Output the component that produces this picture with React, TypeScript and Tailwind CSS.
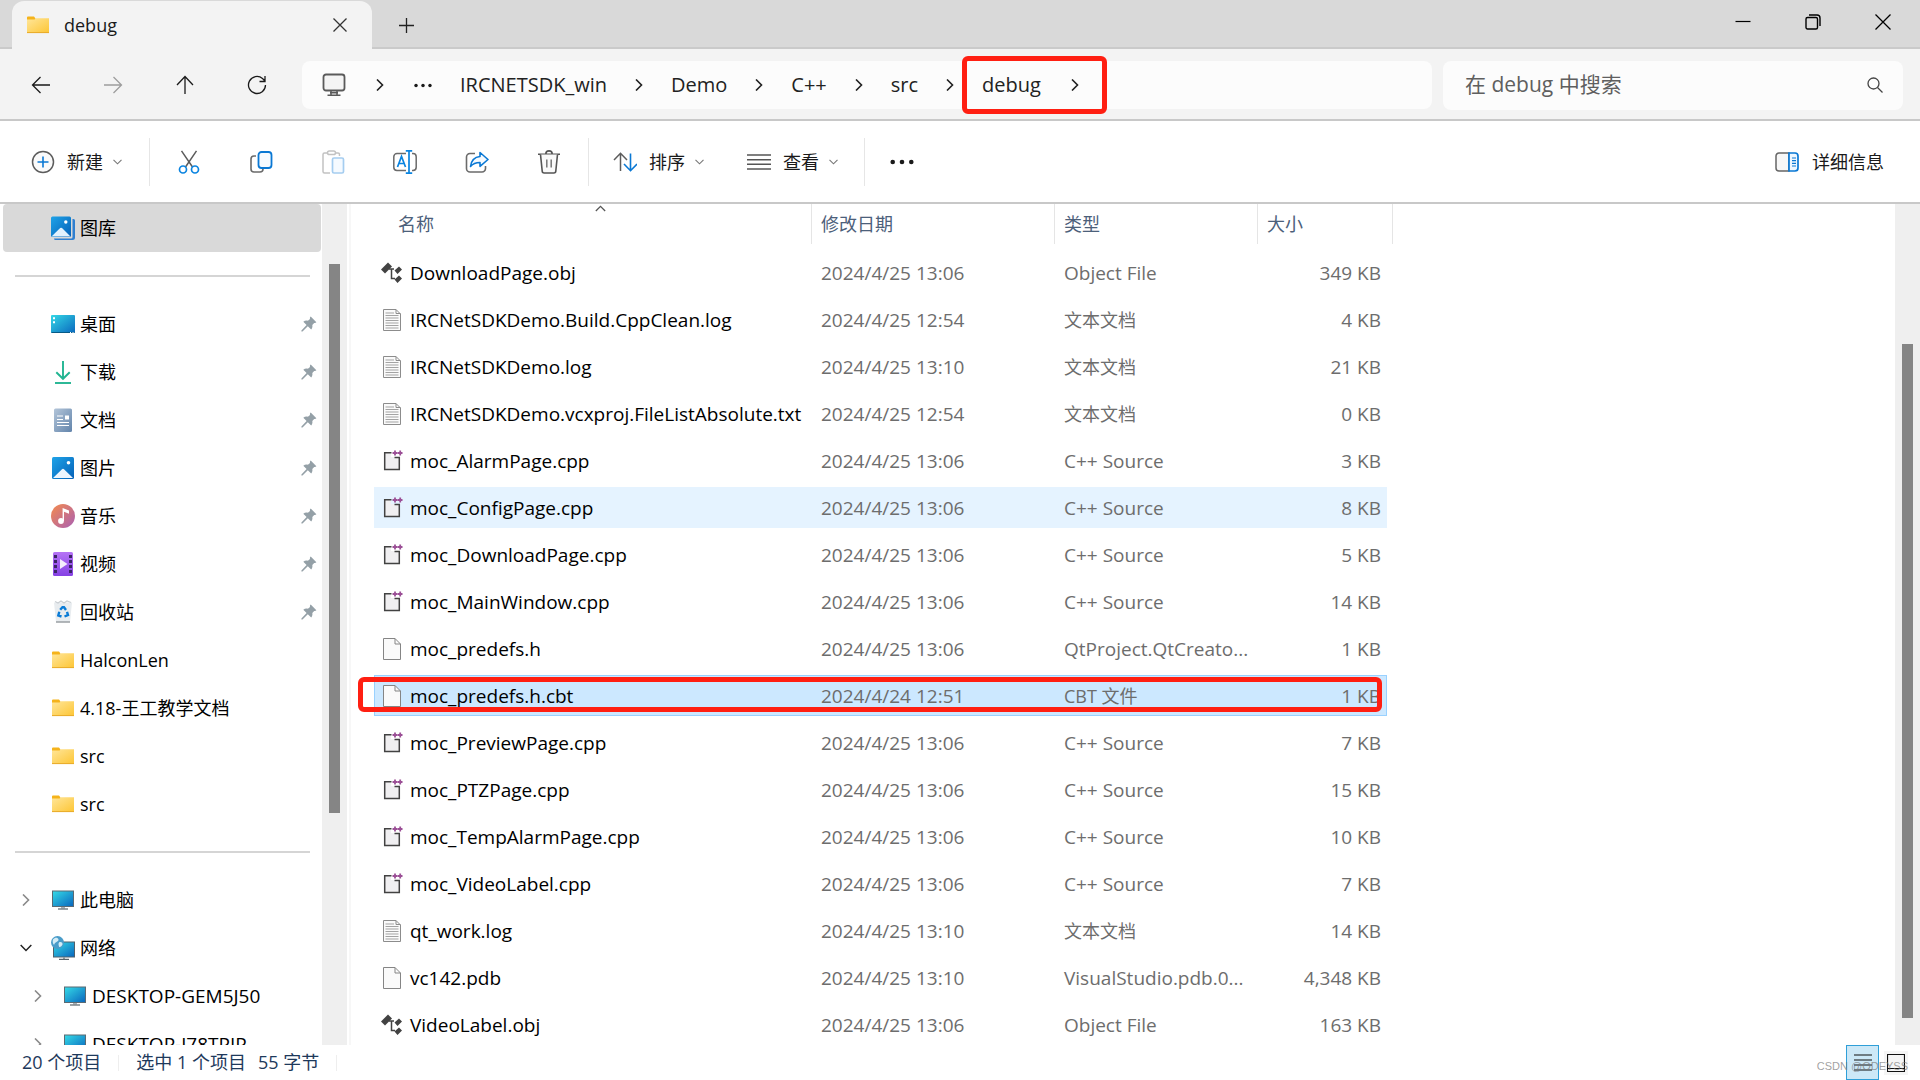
import React from 'react';
import clsx from 'clsx';

type IconProps = { className?: string };

const Svg: React.FC<{ children: React.ReactNode; className?: string }> = ({ children, className = 'h-6 w-6' }) => (
  <svg viewBox="0 0 24 24" fill="none" aria-hidden="true" className={clsx('block shrink-0', className)}>
    {children}
  </svg>
);

/* ---------- small glyphs ---------- */

const ChevronRight = ({ className = 'h-3 w-2' }: IconProps) => (
  <svg viewBox="0 0 8 12" fill="none" aria-hidden="true" className={clsx('block shrink-0', className)}>
    <path d="M1 0.5 6.5 6 1 11.5" stroke="currentColor" strokeWidth="1.6" />
  </svg>
);

const ChevronDown = ({ className = 'h-[6px] w-[9px] text-[#777]' }: IconProps) => (
  <svg viewBox="0 0 9 6" fill="none" aria-hidden="true" className={clsx('block shrink-0', className)}>
    <path d="M0.5 0.8 4.5 4.8 8.5 0.8" stroke="currentColor" strokeWidth="1.1" />
  </svg>
);

const Pin = () => (
  <svg viewBox="0 0 16 16" aria-hidden="true" className="block h-4 w-4 shrink-0">
    <path
      d="M9.7 0.6 15.4 6.2C14.8 7 14 7 13.2 6.9L11.3 9C11.7 10.6 11.3 12.2 10.2 13.4L6.8 10.3 1.5 15.5 0.4 15.4 0.4 14.5 5.6 9.1 2.3 5.7C3.7 4.7 5.3 4.3 6.9 4.8L9 2.9C8.8 2 9 1.2 9.7 0.6Z"
      fill="#94a0a7"
    />
  </svg>
);

/* ---------- command bar ---------- */

const NewIcon = () => (
  <Svg>
    <circle cx="12" cy="12" r="10.5" stroke="#5c5c5c" strokeWidth="1.5" fill="#fafafa" />
    <path d="M12 6.5V17.5M6.5 12H17.5" stroke="#0a78d4" strokeWidth="1.6" />
  </Svg>
);

const CutIcon = () => (
  <Svg>
    <path d="M4.5 0.8 15.5 17M19.5 0.8 8.5 17" stroke="#5c5c5c" strokeWidth="1.5" />
    <circle cx="6" cy="19.5" r="3.5" stroke="#0a84e0" strokeWidth="1.7" />
    <circle cx="18" cy="19.5" r="3.5" stroke="#0a84e0" strokeWidth="1.7" />
  </Svg>
);

const CopyIcon = () => (
  <Svg>
    <path d="M7 6H5a3 3 0 0 0-3 3v10a3 3 0 0 0 3 3h6a3 3 0 0 0 3-3" stroke="#6b6b6b" strokeWidth="1.6" />
    <rect x="9.5" y="2" width="13" height="16" rx="3" stroke="#0a78d4" strokeWidth="1.8" fill="#f7fbff" />
  </Svg>
);

const PasteIcon = () => (
  <Svg>
    <path
      d="M6 3H3.5A1.5 1.5 0 0 0 2 4.5V21.5A1.5 1.5 0 0 0 3.5 23H9M14 3h3a1.5 1.5 0 0 1 1.5 1.5V6"
      stroke="#c2c2c2"
      strokeWidth="1.5"
    />
    <rect x="6.5" y="1" width="8" height="3.6" rx="1.8" stroke="#c2c2c2" strokeWidth="1.5" />
    <rect x="11.5" y="8" width="11" height="15" rx="1.5" stroke="#a5cdf0" strokeWidth="1.7" fill="#f5faff" />
  </Svg>
);

const RenameIcon = () => (
  <Svg>
    <path
      d="M13 3.5H4A3.2 3.2 0 0 0 0.8 6.7V17.3A3.2 3.2 0 0 0 4 20.5H13M19 3.5h1A3.2 3.2 0 0 1 23.2 6.7V17.3A3.2 3.2 0 0 1 20 20.5H19"
      stroke="#6b6b6b"
      strokeWidth="1.5"
    />
    <path
      d="M4.5 17 8.5 6.5 12.5 17M5.8 13.5H11.2M12.8 0.9H19.2M12.8 23.1H19.2M16 0.9V23.1"
      stroke="#0a84e0"
      strokeWidth="1.7"
    />
  </Svg>
);

const ShareIcon = () => (
  <Svg>
    <path
      d="M10 3.5H5A3.5 3.5 0 0 0 1.5 7V18.5A3.5 3.5 0 0 0 5 22H17A3.5 3.5 0 0 0 20.5 18.5V16"
      stroke="#6b6b6b"
      strokeWidth="1.6"
    />
    <path
      d="M15 2.5 23 9.5 15 16.3V12.5C10.5 12.5 8 13.5 5.5 16.5 6.3 10.5 9.5 7 15 6.5Z"
      stroke="#0a78d4"
      strokeWidth="1.6"
      strokeLinejoin="round"
      fill="#f5faff"
    />
  </Svg>
);

const TrashIcon = () => (
  <Svg>
    <path d="M1 4.2H23M8.8 4C8.8 2 10.2 0.9 12 0.9S15.2 2 15.2 4" stroke="#555" strokeWidth="1.6" />
    <path
      d="M3.5 4.5 5.2 21A2 2 0 0 0 7.2 23H16.8A2 2 0 0 0 18.8 21L20.5 4.5"
      stroke="#555"
      strokeWidth="1.6"
      fill="#fafafa"
    />
    <path d="M9.8 9.5V17.5M14.2 9.5V17.5" stroke="#777" strokeWidth="1.5" />
  </Svg>
);

const SortIcon = () => (
  <Svg>
    <path d="M7.5 21V3.5M1 10 7.5 3.3 14 10" stroke="#5c5c5c" strokeWidth="1.5" />
    <path d="M17.5 3.5V20.5M11 14 17.5 20.7 24 14" stroke="#0a78d4" strokeWidth="1.6" />
  </Svg>
);

const ViewIcon = () => (
  <Svg>
    <path d="M0 5H24M0 9.7H24M0 14.3H24M0 19H24" stroke="#555" strokeWidth="1.4" />
  </Svg>
);

const DetailsIcon = () => (
  <Svg>
    <path d="M14 3H4A3 3 0 0 0 1 6V18A3 3 0 0 0 4 21H14Z" stroke="#666" strokeWidth="1.5" fill="#f7f7f7" />
    <path d="M14 3H20A3 3 0 0 1 23 6V18A3 3 0 0 1 20 21H14Z" stroke="#0a78d4" strokeWidth="1.7" fill="#eef7ff" />
    <path d="M17 8H21M17 10.7H21M17 13.3H21M17 16H21" stroke="#0a78d4" strokeWidth="1.2" />
  </Svg>
);

const Dots = ({ className = 'h-[6px] w-6' }: IconProps) => (
  <svg viewBox="0 0 24 6" aria-hidden="true" className={clsx('block shrink-0', className)}>
    <g fill="#1a1a1a">
      <circle cx="2.7" cy="3" r="2.3" />
      <circle cx="12" cy="3" r="2.3" />
      <circle cx="21.3" cy="3" r="2.3" />
    </g>
  </svg>
);

/* ---------- places ---------- */

const FolderIcon = () => (
  <Svg>
    <path d="M1 4.5A1 1 0 0 1 2 3.5H8L9.5 5.5V9H1Z" fill="#f5b31b" />
    <path d="M1 6.5H8.5L10 5.2H23V19.5H1Z" fill="url(#folder)" />
    <path d="M1 19.6H23" stroke="#e8a820" strokeWidth="1" />
  </Svg>
);

const GalleryIcon = () => (
  <Svg>
    <path
      d="M21.5 3H22.5A1.5 1.5 0 0 1 24 4.5V21.5A2.5 2.5 0 0 1 21.5 24H4.5A1.5 1.5 0 0 1 3 22.5H20A1.5 1.5 0 0 0 21.5 21Z"
      fill="#2f7fd0"
    />
    <rect x="0" y="0.5" width="20" height="20.5" rx="1.5" fill="url(#sky)" />
    <path d="M0.5 20.5 9.2 12A1.5 1.5 0 0 1 11 12L19.5 20.5Z" fill="#e2f1fd" />
    <circle cx="14.8" cy="6" r="1.7" fill="#fff" />
  </Svg>
);

const PicturesIcon = () => (
  <Svg>
    <rect x="1" y="1" width="22" height="22" rx="1.5" fill="url(#sky)" />
    <path d="M2 22 11 13.3A1.4 1.4 0 0 1 13 13.3L22 22Z" fill="#eef6fe" />
    <circle cx="17.5" cy="6.7" r="1.8" fill="#fff" />
  </Svg>
);

const DesktopIcon = () => (
  <Svg>
    <rect x="0" y="3" width="24" height="18" rx="1" fill="url(#screen)" />
    <path d="M0.5 20.5H23.5" stroke="#075a86" strokeWidth="1" />
    <path d="M2 5.2H4V7.2H2ZM2 9.2H4V11.2H2ZM19 20H20V21H19ZM21.5 20H22.5V21H21.5Z" fill="#fff" />
  </Svg>
);

const DownloadsIcon = () => (
  <Svg>
    <path d="M12 1V18.5M5.3 12.2 12 18.8 18.7 12.2" stroke="#22b592" strokeWidth="1.9" />
    <path d="M4 23H20" stroke="#22b592" strokeWidth="1.9" />
  </Svg>
);

const DocumentsIcon = () => (
  <Svg>
    <rect x="3" y="0.5" width="18" height="23.5" rx="1.5" fill="url(#doc)" />
    <path d="M6 8H12M6 11.5H12M6 14.5H18M6 17.5H18" stroke="#fff" strokeWidth="1.2" />
    <rect x="14" y="7.5" width="4" height="4" fill="#fff" />
  </Svg>
);

const MusicIcon = () => (
  <Svg>
    <circle cx="12" cy="12" r="12" fill="url(#music)" />
    <circle cx="10" cy="17" r="2.9" fill="#fff" />
    <path d="M11.6 17V4L18 6.5V9.7L13 7.8V17Z" fill="#fff" />
  </Svg>
);

const VideoIcon = () => (
  <Svg>
    <rect x="2" y="0" width="20" height="24" rx="1.5" fill="url(#video)" />
    <path
      d="M3 3h3v3H3zM3 8h3v3H3zM3 13h3v3H3zM3 18h3v3H3zM18 3h3v3h-3zM18 8h3v3h-3zM18 13h3v3h-3zM18 18h3v3h-3z"
      fill="#3b2466"
    />
    <path d="M9 7 16.5 12 9 17Z" fill="#f4eefc" />
  </Svg>
);

const RecycleIcon = () => (
  <Svg>
    <path d="M3 2.5H21L19 22H5Z" fill="#e8ecef" />
    <path d="M4 1.5 7 3 10 1 13 3 16 1 20 2.5" stroke="#c9ced2" strokeWidth="1.2" />
    <path d="M5 22H19" stroke="#9a9fa3" strokeWidth="1.5" />
    <path
      d="M9.2 9.8 11.5 7.2H13L15 10M16 11.8 17 15 13.5 16.5M10.5 16.5 7.3 15.5 8.3 11.8"
      stroke="#0a7bd6"
      strokeWidth="2.4"
    />
  </Svg>
);

const PcIcon = () => (
  <Svg>
    <rect x="1" y="2.5" width="22" height="16.5" fill="#5b6a73" />
    <rect x="2" y="3.5" width="20" height="14.5" fill="url(#screen)" />
    <path d="M10 19H14V20.5H10Z" fill="#a8b0b5" />
    <path d="M7 21H17" stroke="#59646b" strokeWidth="1.2" />
  </Svg>
);

const NetworkIcon = () => (
  <Svg>
    <rect x="2" y="5.5" width="22" height="16" fill="#4f606b" />
    <rect x="3" y="6.5" width="20" height="14" fill="url(#screen)" />
    <path d="M8 23.3H18M13 21.5V23" stroke="#59646b" strokeWidth="1.2" />
    <circle cx="6.5" cy="6.5" r="6.5" fill="#4a9cc9" />
    <path
      d="M2 3.5C4 1 7 1.5 7.5 3.5S4 6 3.5 8 1 6.5 2 3.5ZM8.5 6C10.5 5.5 12 7 11.5 8.5S8.5 12 8 10.5 7 7 8.5 6Z"
      fill="#d4ecf6"
    />
  </Svg>
);

const Gradients = () => (
  <svg aria-hidden="true" className="absolute h-0 w-0">
    <defs>
      <linearGradient id="folder" x1="0" y1="0" x2="1" y2="1">
        <stop offset="0" stopColor="#ffe69a" />
        <stop offset="1" stopColor="#fdc636" />
      </linearGradient>
      <linearGradient id="sky" x1="0" y1="0" x2="1" y2="1">
        <stop offset="0" stopColor="#1fa3e8" />
        <stop offset="1" stopColor="#0561b8" />
      </linearGradient>
      <linearGradient id="screen" x1="0" y1="0" x2="1" y2="1">
        <stop offset="0" stopColor="#34d8e6" />
        <stop offset="1" stopColor="#0a68be" />
      </linearGradient>
      <linearGradient id="doc" x1="0" y1="0" x2="1" y2="1">
        <stop offset="0" stopColor="#b3c5d9" />
        <stop offset="1" stopColor="#6284ab" />
      </linearGradient>
      <linearGradient id="music" x1="0" y1="0" x2="1" y2="1">
        <stop offset="0" stopColor="#f58b4c" />
        <stop offset="1" stopColor="#a95fb4" />
      </linearGradient>
      <linearGradient id="video" x1="0" y1="0" x2="0" y2="1">
        <stop offset="0" stopColor="#b573f5" />
        <stop offset="1" stopColor="#8541e4" />
      </linearGradient>
    </defs>
  </svg>
);

/* ---------- file types ---------- */

const ObjIcon = () => (
  <Svg>
    <path d="M1 8.5 8 1.5 12 5.5 5 12.5Z" fill="#424242" />
    <path d="M9 8H14M11.5 8V17.5H15" stroke="#424242" strokeWidth="1.5" />
    <path d="M14.5 9.5 19 5.5 22 8.5 17.5 13ZM14.5 18.5 19 14.5 22 17.5 17.5 22Z" fill="#424242" />
  </Svg>
);

const BlankIcon = () => (
  <Svg>
    <path d="M3.5 1.5H15L20.5 7V22.5H3.5Z" fill="#fafafa" stroke="#858585" />
    <path d="M15 1.5V7H20.5" stroke="#858585" />
  </Svg>
);

const TextIcon = () => (
  <Svg>
    <path d="M3.5 1.5H16L20.5 6V22.5H3.5Z" fill="#fafafa" stroke="#8c8c8c" />
    <path d="M16 1.5V5.5H20.5" stroke="#8c8c8c" />
    <path
      d="M5.5 5H14M5.5 7.5H18.5M5.5 10H18.5M5.5 12.5H18.5M5.5 15H18.5M5.5 17.5H18.5M5.5 20H18.5"
      stroke="#a3a3a3"
    />
  </Svg>
);

const CppIcon = () => (
  <Svg>
    <path d="M5 4H11V8H19V20H5Z" fill="#f0eff1" />
    <path d="M11.5 3.7H4.7V20.5H19.3V8.5H14.5" stroke="#424242" strokeWidth="1.5" />
    <path d="M12.5 4H17.5M15 1.5V6.5M17.8 4H22.5M20.2 1.5V6.5" stroke="#9b4f96" strokeWidth="1.8" />
  </Svg>
);

/* ---------- data ---------- */

const fileIcons = { obj: ObjIcon, text: TextIcon, cpp: CppIcon, blank: BlankIcon };

interface FileEntry {
  name: string;
  date: string;
  type: string;
  size: string;
  icon: keyof typeof fileIcons;
  state?: 'hover' | 'selected';
}

const files: FileEntry[] = [
  { name: 'DownloadPage.obj', date: '2024/4/25 13:06', type: 'Object File', size: '349 KB', icon: 'obj' },
  { name: 'IRCNetSDKDemo.Build.CppClean.log', date: '2024/4/25 12:54', type: '文本文档', size: '4 KB', icon: 'text' },
  { name: 'IRCNetSDKDemo.log', date: '2024/4/25 13:10', type: '文本文档', size: '21 KB', icon: 'text' },
  { name: 'IRCNetSDKDemo.vcxproj.FileListAbsolute.txt', date: '2024/4/25 12:54', type: '文本文档', size: '0 KB', icon: 'text' },
  { name: 'moc_AlarmPage.cpp', date: '2024/4/25 13:06', type: 'C++ Source', size: '3 KB', icon: 'cpp' },
  { name: 'moc_ConfigPage.cpp', date: '2024/4/25 13:06', type: 'C++ Source', size: '8 KB', icon: 'cpp', state: 'hover' },
  { name: 'moc_DownloadPage.cpp', date: '2024/4/25 13:06', type: 'C++ Source', size: '5 KB', icon: 'cpp' },
  { name: 'moc_MainWindow.cpp', date: '2024/4/25 13:06', type: 'C++ Source', size: '14 KB', icon: 'cpp' },
  { name: 'moc_predefs.h', date: '2024/4/25 13:06', type: 'QtProject.QtCreato...', size: '1 KB', icon: 'blank' },
  { name: 'moc_predefs.h.cbt', date: '2024/4/24 12:51', type: 'CBT 文件', size: '1 KB', icon: 'blank', state: 'selected' },
  { name: 'moc_PreviewPage.cpp', date: '2024/4/25 13:06', type: 'C++ Source', size: '7 KB', icon: 'cpp' },
  { name: 'moc_PTZPage.cpp', date: '2024/4/25 13:06', type: 'C++ Source', size: '15 KB', icon: 'cpp' },
  { name: 'moc_TempAlarmPage.cpp', date: '2024/4/25 13:06', type: 'C++ Source', size: '10 KB', icon: 'cpp' },
  { name: 'moc_VideoLabel.cpp', date: '2024/4/25 13:06', type: 'C++ Source', size: '7 KB', icon: 'cpp' },
  { name: 'qt_work.log', date: '2024/4/25 13:10', type: '文本文档', size: '14 KB', icon: 'text' },
  { name: 'vc142.pdb', date: '2024/4/25 13:10', type: 'VisualStudio.pdb.0...', size: '4,348 KB', icon: 'blank' },
  { name: 'VideoLabel.obj', date: '2024/4/25 13:06', type: 'Object File', size: '163 KB', icon: 'obj' },
];

interface Place {
  label: string;
  icon: React.FC;
  pinned?: boolean;
  tree?: 'open' | 'closed';
  child?: boolean;
}

const quickAccess: Place[] = [
  { label: '桌面', icon: DesktopIcon, pinned: true },
  { label: '下载', icon: DownloadsIcon, pinned: true },
  { label: '文档', icon: DocumentsIcon, pinned: true },
  { label: '图片', icon: PicturesIcon, pinned: true },
  { label: '音乐', icon: MusicIcon, pinned: true },
  { label: '视频', icon: VideoIcon, pinned: true },
  { label: '回收站', icon: RecycleIcon, pinned: true },
  { label: 'HalconLen', icon: FolderIcon },
  { label: '4.18-王工教学文档', icon: FolderIcon },
  { label: 'src', icon: FolderIcon },
  { label: 'src', icon: FolderIcon },
];

const devices: Place[] = [
  { label: '此电脑', icon: PcIcon, tree: 'closed' },
  { label: '网络', icon: NetworkIcon, tree: 'open' },
  { label: 'DESKTOP-GEM5J50', icon: PcIcon, tree: 'closed', child: true },
  { label: 'DESKTOP-J78TPIP', icon: PcIcon, tree: 'closed', child: true },
];

/* ---------- window parts ---------- */

const TitleBar = () => (
  <header className="flex h-[49px] shrink-0 items-stretch border-b-2 border-[#cacaca] bg-[#d9d9d9]">
    <div className="z-10 mt-px -mb-[2px] ml-3 flex w-[360px] items-center rounded-t-xl bg-[#f3f3f3] pr-[25px] pl-[14px]">
      <FolderIcon />
      <span className="ml-[14px] flex-1 text-[18px] font-medium text-[#1a1a1a]">debug</span>
      <button type="button" aria-label="关闭标签页">
        <svg viewBox="0 0 14 14" className="block h-[14px] w-[14px]">
          <path d="M0.5 0.5 13.5 13.5M13.5 0.5 0.5 13.5" stroke="#333" strokeWidth="1.3" />
        </svg>
      </button>
    </div>
    <button type="button" aria-label="新标签页" className="ml-[27px] pt-1">
      <svg viewBox="0 0 15 15" className="block h-[15px] w-[15px]">
        <path d="M7.5 0V15M0 7.5H15" stroke="#222" strokeWidth="1.3" />
      </svg>
    </button>
    <div className="ml-auto flex items-center pr-[2px] pb-1">
      <button type="button" aria-label="最小化" className="flex w-[70px] justify-center">
        <svg viewBox="0 0 16 16" className="block h-4 w-4">
          <path d="M0.5 7.5H15.5" stroke="#000" strokeWidth="1.2" />
        </svg>
      </button>
      <button type="button" aria-label="还原" className="flex w-[70px] justify-center">
        <svg viewBox="0 0 16 16" fill="none" className="block h-4 w-4">
          <rect x="1" y="3.5" width="11.5" height="11.5" rx="1.5" stroke="#000" strokeWidth="1.4" />
          <path d="M4 1H12A3 3 0 0 1 15 4V12" stroke="#000" strokeWidth="1.4" />
        </svg>
      </button>
      <button type="button" aria-label="关闭" className="flex w-[70px] justify-center">
        <svg viewBox="0 0 16 16" className="block h-4 w-4">
          <path d="M0.5 0.5 15.5 15.5M15.5 0.5 0.5 15.5" stroke="#000" strokeWidth="1.3" />
        </svg>
      </button>
    </div>
  </header>
);

const navButtons = [
  { label: '后退', path: 'M18 9H0.5M8.5 1 0.5 9 8.5 17', color: '#1a1a1a' },
  { label: '前进', path: 'M0 9H17.5M9.5 1 17.5 9 9.5 17', color: '#9d9d9d' },
  { label: '上移', path: 'M9 18V0.5M1 9 9 0.5 17 9', color: '#1a1a1a' },
  { label: '刷新', path: 'M17.5 9A8.5 8.5 0 1 1 14.5 2.5L17 5M17 0V5.5H11.5', color: '#1a1a1a' },
];

const AddressBar = () => (
  <div className="flex h-[72px] shrink-0 items-center border-b-2 border-[#c8c8c8] bg-[#f3f3f3] pt-[2px] pr-[17px] pl-[5px]">
    {navButtons.map((b) => (
      <button key={b.label} type="button" aria-label={b.label} className="flex w-[72px] justify-center">
        <svg viewBox="0 0 18 18" fill="none" className="block h-[18px] w-[18px] overflow-visible">
          <path d={b.path} stroke={b.color} strokeWidth="1.3" />
        </svg>
      </button>
    ))}
    <nav
      aria-label="路径"
      className="ml-[9px] flex h-12 flex-1 items-center rounded-lg bg-[#fcfcfc] pl-5 text-[20px] text-[#222]"
    >
      <Svg>
        <rect x="1.5" y="1.5" width="21" height="16" rx="2.5" stroke="#5a5a5a" strokeWidth="1.8" fill="#f4f4f4" />
        <path d="M9 18V22M15 18V22M5.5 22.3H18.5M8 19.8H16" stroke="#5a5a5a" strokeWidth="1.5" />
      </Svg>
      <ChevronRight className="mx-[30px] h-3 w-2" />
      <Dots className="mr-7 h-[5px] w-[18px]" />
      {['IRCNETSDK_win', 'Demo', 'C++', 'src'].map((part) => (
        <React.Fragment key={part}>
          <a href="#" className="leading-7">
            {part}
          </a>
          <ChevronRight className="mx-7 h-3 w-2" />
        </React.Fragment>
      ))}
      <span className="relative flex items-center">
        <a href="#" className="leading-7">
          debug
        </a>
        <ChevronRight className="ml-[30px] h-3 w-2" />
        <span className="absolute -inset-y-[15px] -right-7 -left-5 rounded-md border-[5px] border-[#ff1f12]" />
      </span>
    </nav>
    <label className="ml-[11px] flex h-[49px] w-[460px] items-center rounded-lg bg-[#fcfcfc] pr-5 pl-[22px]">
      <input
        type="text"
        aria-label="搜索"
        placeholder="在 debug 中搜索"
        className="min-w-0 flex-1 bg-transparent text-[21px] text-[#222] outline-none placeholder:text-[#5f5f5f]"
      />
      <svg viewBox="0 0 16 16" fill="none" className="block h-4 w-4">
        <circle cx="6.5" cy="6.5" r="5.5" stroke="#444" strokeWidth="1.3" />
        <path d="M10.5 10.5 15.5 15.5" stroke="#444" strokeWidth="1.3" />
      </svg>
    </label>
  </div>
);

const Separator = () => <div className="h-12 w-px bg-[#e6e6e6]" />;

const actions = [
  { label: '剪切', icon: CutIcon },
  { label: '复制', icon: CopyIcon },
  { label: '粘贴', icon: PasteIcon },
  { label: '重命名', icon: RenameIcon },
  { label: '共享', icon: ShareIcon },
  { label: '删除', icon: TrashIcon },
];

const MenuButton: React.FC<{ icon: React.FC; label: string }> = ({ icon: Icon, label }) => (
  <button type="button" className="flex items-center">
    <Icon />
    <span className="mr-[10px] ml-3 leading-6">{label}</span>
    <ChevronDown />
  </button>
);

const CommandBar = () => (
  <div className="flex h-[83px] shrink-0 items-center border-b-2 border-[#c8c8c8] bg-white pr-9 pl-[31px] text-[18px] text-[#1a1a1a]">
    <MenuButton icon={NewIcon} label="新建" />
    <div className="ml-[27px] flex items-center">
      <Separator />
      <div className="mx-[3px] flex">
        {actions.map(({ label, icon: Icon }) => (
          <button key={label} type="button" aria-label={label} className="flex w-[72px] justify-center">
            <Icon />
          </button>
        ))}
      </div>
      <Separator />
    </div>
    <div className="mr-[26px] ml-6 flex gap-[43px]">
      <MenuButton icon={SortIcon} label="排序" />
      <MenuButton icon={ViewIcon} label="查看" />
    </div>
    <Separator />
    <button type="button" aria-label="查看更多" className="ml-[25px]">
      <Dots />
    </button>
    <button type="button" className="ml-auto flex items-center gap-[13px]">
      <DetailsIcon />
      <span className="leading-6">详细信息</span>
    </button>
  </div>
);

const Divider = () => (
  <li className="flex h-12 items-center pr-3 pl-[15px]">
    <hr className="w-full border-t-2 border-[#d5d5d5]" />
  </li>
);

const PlaceRow: React.FC<{ place: Place }> = ({ place }) => {
  const Icon = place.icon;
  return (
    <li>
      <a
        href="#"
        className={clsx('flex h-12 items-center pr-[5px]', place.child ? 'pl-[30px] text-[19px]' : 'pl-[18px]')}
      >
        <span className="mr-[17px] flex w-4 shrink-0 justify-center">
          {place.tree === 'closed' && <ChevronRight className="h-3 w-2 text-[#8a8a8a]" />}
          {place.tree === 'open' && <ChevronDown className="h-2 w-3 text-[#222]" />}
        </span>
        <Icon />
        <span className="ml-[5px] flex-1 truncate">{place.label}</span>
        {place.pinned && <Pin />}
      </a>
    </li>
  );
};

const Sidebar = () => (
  <aside className="flex shrink-0 overflow-hidden">
    <ul className="w-[322px] text-[18px] text-black">
      <li className="pr-px pl-[3px]">
        <a href="#" className="flex h-12 items-center rounded-sm bg-[#d9d9d9] pl-12">
          <GalleryIcon />
          <span className="ml-[5px]">图库</span>
        </a>
      </li>
      <Divider />
      {quickAccess.map((place, i) => (
        <PlaceRow key={i} place={place} />
      ))}
      <Divider />
      {devices.map((place) => (
        <PlaceRow key={place.label} place={place} />
      ))}
    </ul>
    <div className="w-[25px] bg-[#efefef] px-[7px] pt-[60px]">
      <div className="h-[549px] bg-[#858585]" />
    </div>
    <div className="ml-[2px] w-[2px] bg-[#f7f7f7]" />
  </aside>
);

const cellBase = 'border-y-[3px] border-transparent bg-clip-padding p-0';

const cellState = {
  hover: 'bg-[#e5f3ff]',
  selected:
    'bg-[#cce8ff] shadow-[inset_0_1px_0_#99d1ff,inset_0_-1px_0_#99d1ff] first:shadow-[inset_1px_1px_0_#99d1ff,inset_0_-1px_0_#99d1ff] [&:nth-child(4)]:shadow-[inset_-1px_-1px_0_#99d1ff,inset_0_1px_0_#99d1ff]',
};

const FileRow: React.FC<{ file: FileEntry }> = ({ file }) => {
  const Icon = fileIcons[file.icon];
  const cell = clsx(cellBase, file.state && cellState[file.state]);
  return (
    <tr className="relative h-[47px]">
      <td className={cell}>
        <div className="flex items-center gap-[6px] pl-[6px] text-black">
          <Icon />
          <span className="whitespace-nowrap">{file.name}</span>
        </div>
        {file.state === 'selected' && (
          <span className="absolute top-[5px] right-[11px] bottom-[7px] -left-4 rounded-md border-[5px] border-[#ff1f12]" />
        )}
      </td>
      <td className={cell}>
        <div className="pl-[9px] whitespace-nowrap">{file.date}</div>
      </td>
      <td className={cell}>
        <div className={clsx('pl-[9px] whitespace-nowrap', /[\u4e00-\u9fa5]/.test(file.type) && 'text-[18px]')}>
          {file.type}
        </div>
      </td>
      <td className={cell}>
        <div className="pr-[6px] text-right whitespace-nowrap">{file.size}</div>
      </td>
      <td />
    </tr>
  );
};

const columns = ['名称', '修改日期', '类型'];

const FileList = () => (
  <main className="relative min-w-0 flex-1 overflow-hidden bg-white pl-[23px]">
    <ChevronDown className="absolute top-px left-[244px] h-[7px] w-[11px] rotate-180 text-[#555]" />
    <table className="w-[1019px] table-fixed border-separate border-spacing-0 text-[19px] leading-7 text-[#6d6d6d]">
      <colgroup>
        <col className="w-[438px]" />
        <col className="w-[243px]" />
        <col className="w-[203px]" />
        <col className="w-[129px]" />
        <col className="w-[6px]" />
      </colgroup>
      <thead>
        <tr className="text-left text-[18px] text-[#4c607a]">
          {columns.map((name, i) => (
            <th key={name} className="h-[45px] p-0 align-top font-normal">
              <div className={clsx('flex h-10 items-center border-r border-[#e5e5e5]', i === 0 ? 'pl-6' : 'pl-[9px]')}>
                {name}
              </div>
            </th>
          ))}
          <th colSpan={2} className="h-[45px] p-0 align-top font-normal">
            <div className="flex h-10 items-center border-r border-[#e5e5e5] pl-[9px]">大小</div>
          </th>
        </tr>
      </thead>
      <tbody>
        {files.map((file) => (
          <FileRow key={file.name} file={file} />
        ))}
      </tbody>
    </table>
  </main>
);

const StatusBar = () => (
  <footer className="relative flex h-[35px] shrink-0 items-center bg-white pr-3 pl-[22px] text-[18px] text-[#1e395b]">
    <span>20 个项目</span>
    <span className="mx-[17px] h-4 w-px bg-[#eeeeee]" />
    <span>选中 1 个项目</span>
    <span className="ml-3">55 字节</span>
    <span className="mx-[17px] h-4 w-px bg-[#eeeeee]" />
    <div className="ml-auto flex items-center gap-[5px]">
      <button
        type="button"
        aria-label="详细信息视图"
        className="flex h-[35px] w-[33px] items-center justify-center border border-[#2f9fd8] bg-[#cce8f7]"
      >
        <svg viewBox="0 0 18 17" className="block h-[17px] w-[18px]">
          <path d="M0 1H18M0 6H18M0 11H18M0 16H18" stroke="#111" strokeWidth="1.2" />
        </svg>
      </button>
      <button type="button" aria-label="大图标视图" className="flex h-6 w-6 items-center justify-center bg-[#f5f5f5]">
        <svg viewBox="0 0 18 18" fill="none" className="block h-[18px] w-[18px]">
          <path d="M0.5 0.5H17.5V17.5H0.5ZM0.5 14.5H17.5" stroke="#111" strokeWidth="1.2" />
        </svg>
      </button>
    </div>
    <span className="absolute right-3 bottom-1 font-['Liberation_Sans',sans-serif] text-[11px] leading-5 text-[#777]/70">
      CSDN @ODEYSS
    </span>
  </footer>
);

export default function App() {
  return (
    <div className="flex h-screen flex-col overflow-hidden bg-white font-['Open_Sans','Noto_Sans_CJK_SC',sans-serif]">
      <Gradients />
      <TitleBar />
      <AddressBar />
      <CommandBar />
      <div className="flex min-h-0 flex-1">
        <Sidebar />
        <FileList />
        <div className="w-[25px] shrink-0 bg-[#efefef] px-[7px] pt-[140px]">
          <div className="h-[674px] bg-[#858585]" />
        </div>
      </div>
      <StatusBar />
    </div>
  );
}
